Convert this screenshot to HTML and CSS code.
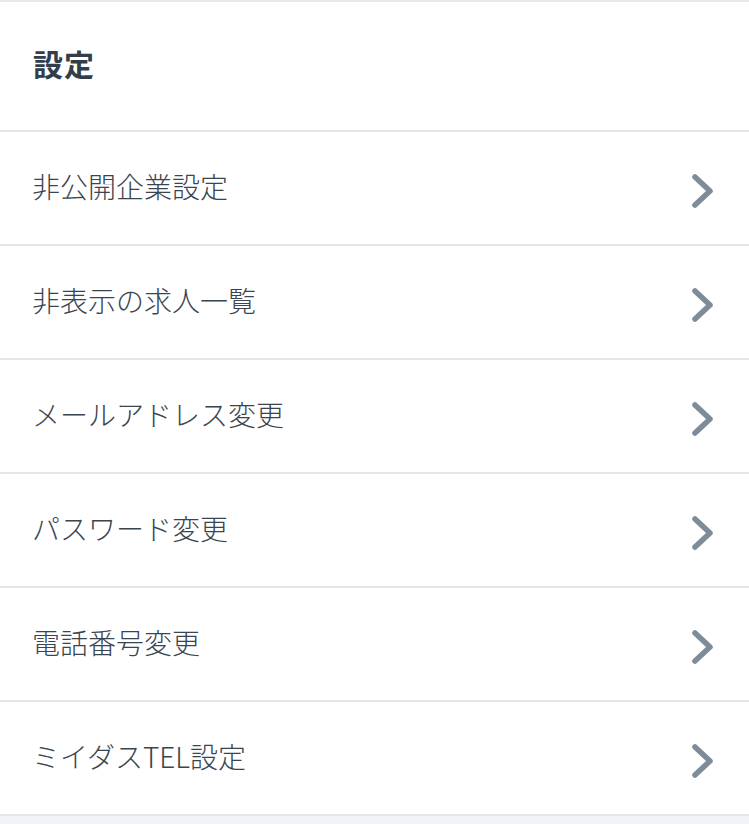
FILE: index.html
```html
<!DOCTYPE html>
<html lang="ja">
<head>
<meta charset="utf-8">
<link rel="stylesheet" href="styles.css">
</head>
<body>
<div class="page">
  <div class="header"><h1 class="title">設定</h1></div>
  <ul class="menu">
    <li class="item"><span class="label">非公開企業設定</span><svg class="chev" viewBox="0 0 26 36" width="26" height="36"><path d="M5 4 L20 18 L5 32" fill="none" stroke="#7e8b99" stroke-width="5.5" stroke-linecap="round" stroke-linejoin="round"/></svg></li>
    <li class="item"><span class="label">非表示の求人一覧</span><svg class="chev" viewBox="0 0 26 36" width="26" height="36"><path d="M5 4 L20 18 L5 32" fill="none" stroke="#7e8b99" stroke-width="5.5" stroke-linecap="round" stroke-linejoin="round"/></svg></li>
    <li class="item"><span class="label">メールアドレス変更</span><svg class="chev" viewBox="0 0 26 36" width="26" height="36"><path d="M5 4 L20 18 L5 32" fill="none" stroke="#7e8b99" stroke-width="5.5" stroke-linecap="round" stroke-linejoin="round"/></svg></li>
    <li class="item"><span class="label">パスワード変更</span><svg class="chev" viewBox="0 0 26 36" width="26" height="36"><path d="M5 4 L20 18 L5 32" fill="none" stroke="#7e8b99" stroke-width="5.5" stroke-linecap="round" stroke-linejoin="round"/></svg></li>
    <li class="item"><span class="label">電話番号変更</span><svg class="chev" viewBox="0 0 26 36" width="26" height="36"><path d="M5 4 L20 18 L5 32" fill="none" stroke="#7e8b99" stroke-width="5.5" stroke-linecap="round" stroke-linejoin="round"/></svg></li>
    <li class="item"><span class="label">ミイダスTEL設定</span><svg class="chev" viewBox="0 0 26 36" width="26" height="36"><path d="M5 4 L20 18 L5 32" fill="none" stroke="#7e8b99" stroke-width="5.5" stroke-linecap="round" stroke-linejoin="round"/></svg></li>
  </ul>
</div>
</body>
</html>
```

FILE: styles.css
```css
html, body {
  margin: 0;
  padding: 0;
  background: #f2f3f6;
}
body {
  font-family: "Noto Sans CJK JP", "Noto Sans", sans-serif;
  color: #3b4651;
}
.page {
  background: #ffffff;
  border-top: 2px solid #e6e8eb;
}
.header {
  display: flex;
  align-items: center;
  padding-left: 33px;
  padding-bottom: 6px;
  border-bottom: 2px solid #e4e6e9;
  box-sizing: border-box;
  height: 130px;
}
.title {
  margin: 0;
  font-size: 30px;
  font-weight: 700;
  color: #323e49;
  line-height: 1;
  letter-spacing: 1px;
}
.menu {
  list-style: none;
  margin: 0;
  padding: 0;
}
.item {
  height: 114px;
  box-sizing: border-box;
  border-bottom: 2px solid #e4e6e9;
  display: flex;
  align-items: center;
  justify-content: space-between;
  padding: 0 33px 0 32px;
}
.label {
  font-size: 28px;
  font-weight: 300;
  line-height: 1;
  color: #3a4550;
  padding-bottom: 4px;
}
.chev {
  display: block;
  margin-top: 6px;
}
```
